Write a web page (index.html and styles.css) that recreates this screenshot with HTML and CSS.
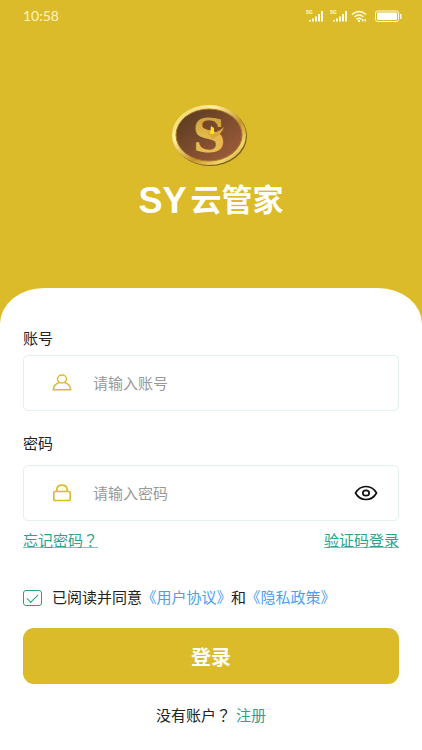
FILE: index.html
```
<!DOCTYPE html>
<html lang="zh-CN">
<head>
  <meta charset="UTF-8">
  <meta name="viewport" content="width=device-width, initial-scale=1">
  <title>SY云管家</title>
  <link rel="stylesheet" href="styles.css">
</head>
<body>

<header class="hero">
  <div class="status-bar">
    <span class="time">10:58</span>
    <svg class="status-icons" width="96" height="14" viewBox="0 0 96 14" fill="#fffbe0">
      <!-- 信号 -->
      <text class="net" x="0" y="5">5G</text>
      <path d="M3 11h2v1.500h-2zM6 9.500h2v3h-2zM9 7.500h2v5h-2zM12 5h2v7.500h-2zM15 2h2v10.500h-2z"/>
      <text class="net" x="24" y="5">5G</text>
      <path d="M27 11h2v1.500h-2zM30 9.500h2v3h-2zM33 7.500h2v5h-2zM36 5h2v7.500h-2zM39 2h2v10.500h-2z"/>
      <!-- WiFi -->
      <g fill="none" stroke="#fffbe0" stroke-width="1.500">
        <path d="M46 5.500q7-6 14 0"/>
        <path d="M48.500 8q4.500-4 9 0"/>
        <path d="M50.500 10.300q2.500-2 5 0"/>
      </g>
      <circle cx="53" cy="12" r="1.200"/>
      <path d="M56 10h1.500v2.500h-1.500zM58.500 10h1.500v2.500h-1.500z"/>
      <!-- 电池 -->
      <rect x="69.500" y="2" width="23" height="10.500" rx="2" fill="none" stroke="#fffbe0"/>
      <rect x="71" y="3.500" width="20" height="7.500" rx="1" fill="#fff"/>
      <rect x="94" y="5" width="1.500" height="5"/>
    </svg>
  </div>

  <svg class="logo" width="78" height="66" viewBox="0 0 78 66">
    <defs>
      <linearGradient id="rim" x1="0" y1="0" x2="1" y2="1">
        <stop offset="0" stop-color="#e9c64c"/>
        <stop offset=".3" stop-color="#fff0a0"/>
        <stop offset=".6" stop-color="#c4932c"/>
        <stop offset=".8" stop-color="#f5d66a"/>
        <stop offset="1" stop-color="#9c7020"/>
      </linearGradient>
      <linearGradient id="face" x1="0" y1="0" x2="1" y2="1">
        <stop offset="0" stop-color="#54381f"/>
        <stop offset="1" stop-color="#a5603c"/>
      </linearGradient>
      <linearGradient id="gold" x1="0" y1="0" x2="0" y2="1">
        <stop offset="0" stop-color="#c69532"/>
        <stop offset=".5" stop-color="#e3b94e"/>
        <stop offset="1" stop-color="#e9bf55"/>
      </linearGradient>
    </defs>
    <ellipse cx="38" cy="32" rx="37" ry="30" fill="#796018"/>
    <ellipse cx="37" cy="31" rx="37" ry="30" fill="url(#rim)"/>
    <ellipse cx="37" cy="31" rx="33" ry="26" fill="url(#face)" stroke="#a87a26"/>
    <text class="logo-letter" x="37" y="48" fill="url(#gold)">S</text>
    <path d="M34 27q8 5 18-4q-3 9-12 12z" fill="#d9a93e"/>
    <path d="M39 22l3 2v6h-4z" fill="#ffe21c"/>
  </svg>
  <h1 class="brand"><span class="brand-latin">SY</span>云管家</h1>
</header>

<main class="panel">
  <form class="login-form">
    <label class="field-label" for="account">账号</label>
    <div class="field">
      <svg class="field-icon" width="20" height="18" viewBox="0 0 20 18" fill="none" stroke="#dbbb31" stroke-width="1.500">
        <ellipse cx="10" cy="5" rx="4.500" ry="3.900"/>
        <path d="M7.500 8.500C4 9.500 1.500 12 1.300 15.800h17.400C18.500 12 16 9.500 12.500 8.500"/>
      </svg>
      <input class="field-input" type="text" id="account" placeholder="请输入账号">
    </div>

    <label class="field-label password-label" for="password">密码</label>
    <div class="field">
      <svg class="field-icon" width="20" height="18" viewBox="0 0 20 18" fill="none" stroke="#dbbb31" stroke-width="1.700">
        <rect x="1.800" y="7.500" width="16.400" height="9" rx="1"/>
        <path d="M4.800 7.500V6C4.800 3 7 1.200 10 1.200S15.200 3 15.200 6v1.500"/>
      </svg>
      <input class="field-input" type="password" id="password" placeholder="请输入密码">
      <button class="eye" type="button" aria-label="显示密码">
        <svg width="24" height="16" viewBox="0 0 24 16" fill="none" stroke="#111" stroke-width="1.700">
          <path d="M1.500 8C4 3.500 7.500 1.500 12 1.500S20 3.500 22.500 8C20 12.500 16.500 14.500 12 14.500S4 12.500 1.500 8z"/>
          <ellipse cx="12" cy="8" rx="3.200" ry="2.700"/>
        </svg>
      </button>
    </div>

    <div class="links">
      <a class="link underlined" href="#">忘记密码<span class="mark" lang="zh-TW">？</span></a>
      <a class="link underlined" href="#">验证码登录</a>
    </div>

    <div class="agreement">
      <input class="check" type="checkbox" id="agree" checked>
      <label for="agree">已阅读并同意</label>
      <a class="doc" href="#">《用户协议》</a>
      <span>和</span>
      <a class="doc" href="#">《隐私政策》</a>
    </div>

    <button class="submit" type="submit">登录</button>
  </form>

  <p class="register"><span>没有账户<span class="mark" lang="zh-TW">？</span></span><a class="link" href="#">注册</a></p>
</main>

</body>
</html>
```
FILE: styles.css
```
* {
  box-sizing: border-box;
}

body {
  margin: 0;
  background: #dbbb29;
  color: #222;
  font-family: "Liberation Sans", "Noto Sans CJK SC", sans-serif;
  font-size: 15px;
  line-height: 20px;
  min-height: 100vh;
  display: flex;
  flex-direction: column;
}

.hero {
  display: flex;
  flex-direction: column;
  align-items: center;
  padding-bottom: 69px;
}

.status-bar {
  align-self: stretch;
  display: flex;
  justify-content: space-between;
  align-items: center;
  height: 32px;
  padding: 0 20px 0 23px;
}

.time {
  color: #fff5bd;
  font-family: Lato, sans-serif;
  font-size: 14px;
}

.net {
  font: bold 5px "Liberation Sans", sans-serif;
}

.logo {
  margin-top: 72px;
}

.logo-letter {
  font: bold 46px "DejaVu Serif", serif;
  text-anchor: middle;
}

.brand {
  display: flex;
  align-items: center;
  gap: 4px;
  margin: 13px 0 0;
  color: #fff;
  font-size: 31px;
  line-height: 36px;
}

.brand-latin {
  font-family: "Liberation Sans", sans-serif;
  font-size: 36px;
}

.panel {
  flex: 1;
  padding: 41px 23px 20px;
  background: #fff;
  border-radius: 44px 44px 0 0 / 36px 36px 0 0;
}

.field-label {
  display: block;
  margin-bottom: 6px;
}

.password-label {
  margin-top: 23px;
  margin-bottom: 11px;
}

.field {
  display: flex;
  align-items: center;
  height: 56px;
  padding: 0 20px 0 28px;
  border: 1px solid #e4eff0;
  border-radius: 5px;
}

.field-input {
  flex: 1;
  min-width: 0;
  margin-left: 21px;
  padding: 2px 0 0;
  border: none;
  outline: none;
  background: none;
  font: inherit;
}

.field-input::placeholder {
  color: #999;
}

.eye {
  display: flex;
  padding: 0;
  border: none;
  background: none;
  cursor: pointer;
}

.links {
  display: flex;
  justify-content: space-between;
  margin-top: 10px;
}

.link {
  color: #2ba28b;
  text-decoration: none;
}

.underlined {
  text-decoration: underline;
  text-decoration-color: #7cc6b7;
  text-decoration-thickness: 1px;
  text-underline-offset: 1px;
}

.mark {
  font-family: "Noto Sans CJK TC", sans-serif;
  line-height: 1;
}

.agreement {
  display: flex;
  align-items: center;
  gap: 7px;
  margin-top: 37px;
}

.agreement label {
  margin-left: 3px;
}

.check {
  appearance: none;
  display: grid;
  place-items: center;
  width: 19px;
  height: 16px;
  margin: 0;
  border: 1px solid #2ba26f;
  border-radius: 3px;
}

.check:checked::before {
  content: "";
  width: 10px;
  height: 5px;
  border: solid #2ba26f;
  border-width: 0 0 1px 1px;
  transform: translateY(-1px) rotate(-45deg);
}

.doc {
  color: #4b9fee;
  text-decoration: none;
  font-feature-settings: "halt";
}

.submit {
  display: block;
  width: 100%;
  height: 56px;
  margin-top: 20px;
  border: none;
  border-radius: 11px;
  background: #dbbb29;
  color: #fff;
  font: bold 20px "Liberation Sans", "Noto Sans CJK SC", sans-serif;
  cursor: pointer;
}

.register {
  display: flex;
  justify-content: center;
  gap: 5px;
  margin: 22px 0 0;
}
```
